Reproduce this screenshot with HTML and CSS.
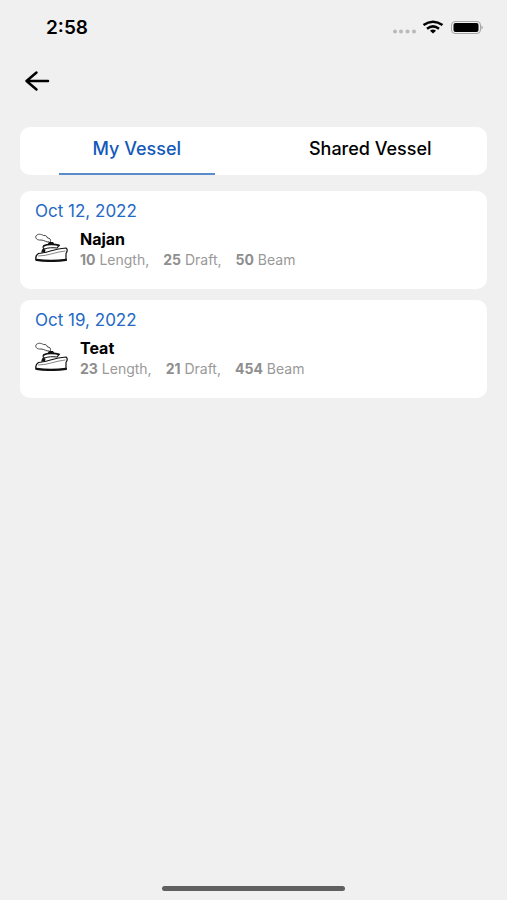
FILE: index.html
```html
<!DOCTYPE html>
<html lang="en">
<head>
<meta charset="utf-8">
<meta name="viewport" content="width=device-width, initial-scale=1">
<title>Vessels</title>
<link rel="stylesheet" href="styles.css">
</head>
<body>
<svg class="defs" aria-hidden="true">
  <symbol id="ship" viewBox="0 0 33 29">
    <g fill="none" stroke="#111" stroke-linecap="round" stroke-linejoin="round">
      <path stroke-width="1" stroke="#444" d="M14 9C11 9.500 9.500 7 6 7C2 7.500 0 5 1 3C2.500 .5 6 1 8.500 2.500C11 2 12 3.500 12.500 5C15 5 16 6.500 15.500 8.500"/>
      <path stroke-width="1.800" d="M9 12.800C12 11 20 11 24 12.300"/>
      <path stroke-width="1.200" d="M9 12.800C7.500 13.500 8 15 9 15.500C7.500 16.500 7 17.500 7 19M24 12.300L22.500 14.500"/>
      <path stroke-width="1" d="M9.500 16C13 14.500 18 14.500 22 15"/>
      <path stroke-width="1.200" d="M3.500 20.500C12 20 18 16 31 15C33 16.500 32 19 31 20.500V26"/>
      <path stroke-width="1.300" d="M3.500 20.500C1 22 .5 24.500 1 26.500"/>
      <path stroke-width="2.200" d="M1.500 26.800C9 28 23 28 31 26.800"/>
      <path stroke-width="0.800" stroke="#666" d="M3.500 23C13 23 20 19 30 18"/>
    </g>
    <path fill="#111" d="M12.500 11.500L14 9H18L19.500 11.500ZM8.500 15.500L10.500 17L10 19L6.500 19.500Z"/>
  </symbol>
</svg>
<div class="screen">
  <header>
    <div class="status">
      <span class="time">2:58</span>
      <svg class="indicators" viewBox="0 0 92 16" role="img" aria-label="No signal, Wi-Fi, battery full">
        <g fill="#b9b9b9"><circle cx="4" cy="11.500" r="2"/><circle cx="10" cy="11.500" r="2"/><circle cx="16.500" cy="11.500" r="2"/><circle cx="23" cy="11.500" r="2"/></g>
        <g fill="none" stroke="#000" stroke-width="2.600"><path d="M32.500 5Q42 -1.500 51.500 5"/><path d="M36 8.700Q42 4.200 48 8.700"/></g>
        <path d="M39 10.700Q42 8.500 45 10.700L42 13.500Z"/>
        <rect x="60.500" y="1.500" width="29" height="12" rx="3.500" fill="none" stroke="#a5a5a5"/>
        <rect x="62.500" y="3" width="25" height="9" rx="2"/>
        <path fill="#999" d="M90.500 5.500Q93 7.500 90.500 9.500Z"/>
      </svg>
    </div>
    <button class="back" aria-label="Back">
      <svg viewBox="0 0 26 22" aria-hidden="true"><path d="M24 11H2.500M12.500 2.500L2.500 11L12.500 19.500"/></svg>
    </button>
  </header>
  <main>
    <div class="tabs" role="tablist">
      <button class="tab active" role="tab" aria-selected="true">My Vessel</button>
      <button class="tab" role="tab" aria-selected="false">Shared Vessel</button>
    </div>
    <article class="card">
      <time class="date" datetime="2022-10-12">Oct 12, 2022</time>
      <div class="vessel">
        <svg class="ship" aria-hidden="true"><use href="#ship"/></svg>
        <div class="info">
          <h2>Najan</h2>
          <p class="stats"><span><b>10</b> Length,</span><span><b>25</b> Draft,</span><span><b>50</b> Beam</span></p>
        </div>
      </div>
    </article>
    <article class="card">
      <time class="date" datetime="2022-10-19">Oct 19, 2022</time>
      <div class="vessel">
        <svg class="ship" aria-hidden="true"><use href="#ship"/></svg>
        <div class="info">
          <h2>Teat</h2>
          <p class="stats"><span><b>23</b> Length,</span><span><b>21</b> Draft,</span><span><b>454</b> Beam</span></p>
        </div>
      </div>
    </article>
  </main>
  <div class="home"></div>
</div>
</body>
</html>
```
FILE: styles.css
```css
* {
  box-sizing: border-box;
}

body {
  margin: 0;
  background: #f0f0f0;
  color: #000;
  font-family: Inter, "Liberation Sans", sans-serif;
}

button {
  border: 0;
  padding: 0;
  background: none;
  font: inherit;
  color: inherit;
}

.defs {
  position: absolute;
  width: 0;
  height: 0;
}

.screen {
  display: flex;
  flex-direction: column;
  min-height: 100vh;
  padding: 16px 20px 9px;
}

.status {
  display: flex;
  align-items: center;
  justify-content: space-between;
  padding: 0 4px 0 26px;
}

.time {
  font-size: 19px;
  line-height: 24px;
  font-weight: 600;
}

.indicators {
  width: 92px;
  height: 16px;
  overflow: visible;
}

.back {
  display: block;
  margin: 28px 4px 0;
  padding: 2px 0;
}

.back svg {
  display: block;
  width: 26px;
  height: 22px;
  fill: none;
  stroke: #000;
  stroke-width: 2.5;
  stroke-linecap: round;
  stroke-linejoin: round;
}

main {
  display: flex;
  flex-direction: column;
  flex: 1;
  gap: 11px;
  padding-top: 33px;
}

.tabs {
  display: grid;
  grid-template-columns: 1fr 1fr;
  margin-bottom: 5px;
  border-radius: 10px;
  background: #fff;
}

.tab {
  display: flex;
  flex-direction: column;
  align-items: center;
  padding-top: 12px;
  font-size: 18px;
  line-height: 20px;
  font-weight: 500;
}

.tab::after {
  content: "";
  width: 67%;
  height: 2px;
  margin-top: 14px;
}

.active {
  color: #1459b8;
}

.active::after {
  background: #588ccb;
}

.card {
  padding: 10px 15px 19px;
  border-radius: 10px;
  background: #fff;
}

.date {
  display: block;
  font-size: 17px;
  line-height: 20px;
  color: #2469c4;
}

.vessel {
  display: flex;
  gap: 12px;
  padding-top: 8px;
}

.ship {
  width: 33px;
  height: 29px;
  margin-top: 4px;
}

h2,
.stats {
  margin: 0;
}

h2 {
  font-size: 16px;
  line-height: 20px;
  font-weight: 700;
}

.stats {
  display: flex;
  gap: 14px;
  padding-top: 1px;
  font-size: 14px;
  line-height: 20px;
  color: #999;
}

.stats b {
  font-weight: 700;
  color: #8e8e8e;
}

.home {
  align-self: center;
  width: 39%;
  height: 5px;
  border-radius: 3px;
  background: #606060;
}
```
